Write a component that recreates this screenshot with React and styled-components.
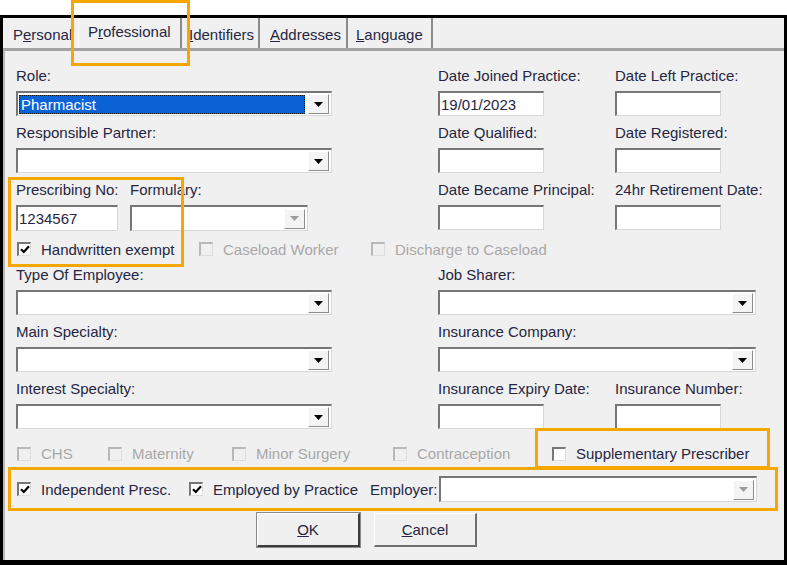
import React from "react";
import styled, { createGlobalStyle, css } from "styled-components";

const GlobalStyle = createGlobalStyle`
  html, body {
    margin: 0;
    padding: 0;
    background: #ffffff;
  }
  body {
    font-family: "Liberation Sans", Arial, sans-serif;
  }
`;

const Screen = styled.div`
  position: relative;
  width: 787px;
  height: 565px;
  padding-top: 15px;
  box-sizing: border-box;
  overflow: hidden;
`;

const Window = styled.div`
  height: 550px;
  box-sizing: border-box;
  border: 3px solid #000;
  border-bottom-width: 5px;
  background: #f0f0f0;
  display: flex;
  flex-direction: column;
  font-size: 15px;
  color: #262642;
`;

const TabStrip = styled.div`
  display: flex;
  height: 30px;
`;

const Tab = styled.div`
  width: ${(p) => p.$w}px;
  box-sizing: border-box;
  display: flex;
  align-items: center;
  padding-left: ${(p) => p.$pl}px;
  padding-top: ${(p) => (p.$active ? 0 : 2)}px;
  padding-bottom: ${(p) => (p.$active ? 4 : 0)}px;
  border-right: 2px solid ${(p) => (p.$last === "none" ? "transparent" : "#8c8c8c")};
  border-left: 1px solid ${(p) => (p.$active ? "#ffffff" : "transparent")};
  white-space: nowrap;
  overflow: hidden;
`;

const Panel = styled.div`
  flex: 1;
  border-top: 3px solid #a3a3a3;
  border-left: 2px solid #b8b8b8;
  padding: 17px 0 0 11px;
  display: flex;
  flex-direction: column;
`;

const Row = styled.div`
  display: flex;
  padding-bottom: ${(p) => (p.$after === undefined ? 9 : p.$after)}px;
`;

const Column = styled.div`
  width: ${(p) => p.$w}px;
  margin-right: ${(p) => p.$mr || 0}px;
  display: flex;
  gap: ${(p) => p.$gap || 0}px;
`;

const Field = styled.div`
  width: ${(p) => p.$w}px;
  display: flex;
  flex-direction: column;
  gap: 7px;
`;

const Label = styled.div`
  height: 16px;
  line-height: 16px;
  white-space: nowrap;
`;

const Sunken = styled.div`
  height: ${(p) => p.$h || 25}px;
  box-sizing: border-box;
  background: #ffffff;
  border-top: 2px solid #767676;
  border-left: 2px solid #767676;
  border-right: 1px solid #d8d8d8;
  border-bottom: 1px solid #d8d8d8;
  display: flex;
  align-items: center;
  padding: 0 2px 0 1px;
  white-space: nowrap;
`;

const SelectValue = styled.div`
  flex: 1;
  height: 19px;
  margin-right: 3px;
  display: flex;
  align-items: center;
  padding-left: 2px;
  ${(p) =>
    p.$selected &&
    css`
      background: #0b63d6;
      color: #ffffff;
      outline: 1px dotted #1a1a1a;
      outline-offset: -1px;
    `}
`;

const ArrowButton = styled.div`
  width: 21px;
  height: 20px;
  box-sizing: border-box;
  background: #f4f4f4;
  border-top: 1px solid #ffffff;
  border-left: 1px solid #ffffff;
  border-right: 1px solid #8c8c8c;
  border-bottom: 1px solid #8c8c8c;
  display: flex;
  align-items: center;
  justify-content: center;
`;

const CheckRow = styled.div`
  display: flex;
  align-items: center;
  height: ${(p) => p.$h}px;
  padding-top: ${(p) => p.$pt || 0}px;
  box-sizing: border-box;
`;

const CheckItem = styled.div`
  display: flex;
  align-items: center;
  gap: 10px;
  width: ${(p) => (p.$w ? `${p.$w}px` : "auto")};
  flex-shrink: 0;
  color: ${(p) => (p.$disabled ? "#a8a8a8" : "inherit")};
  white-space: nowrap;
`;

const Box = styled.span`
  width: 14px;
  height: 14px;
  margin-left: 1px;
  box-sizing: border-box;
  background: ${(p) => (p.$disabled ? "#f0f0f0" : "#ffffff")};
  border-top: 2px solid ${(p) => (p.$disabled ? "#b8b8b8" : "#767676")};
  border-left: 2px solid ${(p) => (p.$disabled ? "#b8b8b8" : "#767676")};
  border-right: 1px solid #dedede;
  border-bottom: 1px solid #dedede;
  display: flex;
  align-items: center;
  justify-content: center;
`;

const InlineLabel = styled.span`
  margin-right: 1px;
  white-space: nowrap;
`;

const ButtonRow = styled.div`
  display: flex;
  gap: 14px;
  padding-left: 241px;
  margin-top: 3px;
`;

const Button = styled.button`
  width: 103px;
  height: 34px;
  padding: 0;
  font: inherit;
  color: inherit;
  background: #f0f0f0;
  border-style: solid;
  border-width: 1px 2px 2px 1px;
  border-color: #ffffff ${(p) => (p.$default ? "#3c3c3c" : "#6e6e6e")}
    ${(p) => (p.$default ? "#3c3c3c" : "#6e6e6e")} #ffffff;
  box-shadow: ${(p) => (p.$default ? "0 0 0 1px #8a8a8a" : "none")};
`;

const Highlight = styled.div`
  position: absolute;
  left: ${(p) => p.$x}px;
  top: ${(p) => p.$y}px;
  width: ${(p) => p.$w}px;
  height: ${(p) => p.$h}px;
  box-sizing: border-box;
  border: 3px solid #f6a704;
  pointer-events: none;
`;

const Arrow = ({ disabled }) => (
  <svg width="9" height="5" viewBox="0 0 9 5">
    <polygon points="0,0 9,0 4.5,5" fill={disabled ? "#9c9c9c" : "#000"} />
  </svg>
);

const Select = ({ value, selected, disabled, h }) => (
  <Sunken $h={h}>
    <SelectValue $selected={selected}>{value}</SelectValue>
    <ArrowButton>
      <Arrow disabled={disabled} />
    </ArrowButton>
  </Sunken>
);

const Check = ({ label, checked, disabled, w }) => (
  <CheckItem $w={w} $disabled={disabled}>
    <Box $disabled={disabled}>
      {checked && (
        <svg width="10" height="9" viewBox="0 0 10 9">
          <path d="M1 4.2 L3.8 7 L9 1.2" fill="none" stroke="#000" strokeWidth="2.2" />
        </svg>
      )}
    </Box>
    {label}
  </CheckItem>
);

const DatePair = ({ a, b, va }) => (
  <Column $w={318} $gap={71}>
    <Field $w={106}>
      <Label>{a}</Label>
      <Sunken>{va}</Sunken>
    </Field>
    <Field $w={106}>
      <Label>{b}</Label>
      <Sunken />
    </Field>
  </Column>
);

const WideSelect = ({ label, value, selected, w }) => (
  <Field $w={w}>
    <Label>{label}</Label>
    <Select value={value} selected={selected} />
  </Field>
);

export default function App() {
  return (
    <>
      <GlobalStyle />
      <Screen>
        <Window>
          <TabStrip>
            <Tab $w={75} $pl={9} $last="none">
              P<u>e</u>rsonal
            </Tab>
            <Tab $w={104} $pl={9} $active>
              P<u>r</u>ofessional
            </Tab>
            <Tab $w={78} $pl={6}>
              <u>I</u>dentifiers
            </Tab>
            <Tab $w={88} $pl={9}>
              <u>A</u>ddresses
            </Tab>
            <Tab $w={85} $pl={7}>
              <u>L</u>anguage
            </Tab>
          </TabStrip>
          <Panel>
            <Row>
              <Column $w={316} $mr={106}>
                <WideSelect label="Role:" value="Pharmacist" selected w={316} />
              </Column>
              <DatePair a="Date Joined Practice:" b="Date Left Practice:" va="19/01/2023" />
            </Row>
            <Row>
              <Column $w={316} $mr={106}>
                <WideSelect label="Responsible Partner:" w={316} />
              </Column>
              <DatePair a="Date Qualified:" b="Date Registered:" />
            </Row>
            <Row $after={0}>
              <Column $w={316} $mr={106} $gap={12}>
                <Field $w={102}>
                  <Label>Prescribing No:</Label>
                  <Sunken $h={26}>1234567</Sunken>
                </Field>
                <Field $w={178}>
                  <Label>Formulary:</Label>
                  <Select disabled h={26} />
                </Field>
              </Column>
              <DatePair a="Date Became Principal:" b="24hr Retirement Date:" />
            </Row>
            <CheckRow $h={36}>
              <Check w={182} label="Handwritten exempt" checked />
              <Check w={172} label="Caseload Worker" disabled />
              <Check label="Discharge to Caseload" disabled />
            </CheckRow>
            <Row>
              <Column $w={316} $mr={106}>
                <WideSelect label="Type Of Employee:" w={316} />
              </Column>
              <WideSelect label="Job Sharer:" w={318} />
            </Row>
            <Row>
              <Column $w={316} $mr={106}>
                <WideSelect label="Main Specialty:" w={316} />
              </Column>
              <WideSelect label="Insurance Company:" w={318} />
            </Row>
            <Row $after={0}>
              <Column $w={316} $mr={106}>
                <WideSelect label="Interest Specialty:" w={316} />
              </Column>
              <DatePair a="Insurance Expiry Date:" b="Insurance Number:" />
            </Row>
            <CheckRow $h={39} $pt={10}>
              <Check w={91} label="CHS" disabled />
              <Check w={124} label="Maternity" disabled />
              <Check w={161} label="Minor Surgery" disabled />
              <Check w={159} label="Contraception" disabled />
              <Check label="Supplementary Prescriber" />
            </CheckRow>
            <CheckRow $h={42}>
              <Check w={172} label="Independent Presc." checked />
              <Check w={182} label="Employed by Practice" checked />
              <InlineLabel>Employer:</InlineLabel>
              <Column $w={318}>
                <Field $w={318}>
                  <Select disabled h={26} />
                </Field>
              </Column>
            </CheckRow>
            <ButtonRow>
              <Button $default>
                <u>O</u>K
              </Button>
              <Button>
                <u>C</u>ancel
              </Button>
            </ButtonRow>
          </Panel>
        </Window>
        <Highlight $x={71} $y={0} $w={119} $h={66} />
        <Highlight $x={8} $y={177} $w={176} $h={90} />
        <Highlight $x={535} $y={428} $w={235} $h={41} />
        <Highlight $x={8} $y={467} $w={770} $h={44} />
      </Screen>
    </>
  );
}
